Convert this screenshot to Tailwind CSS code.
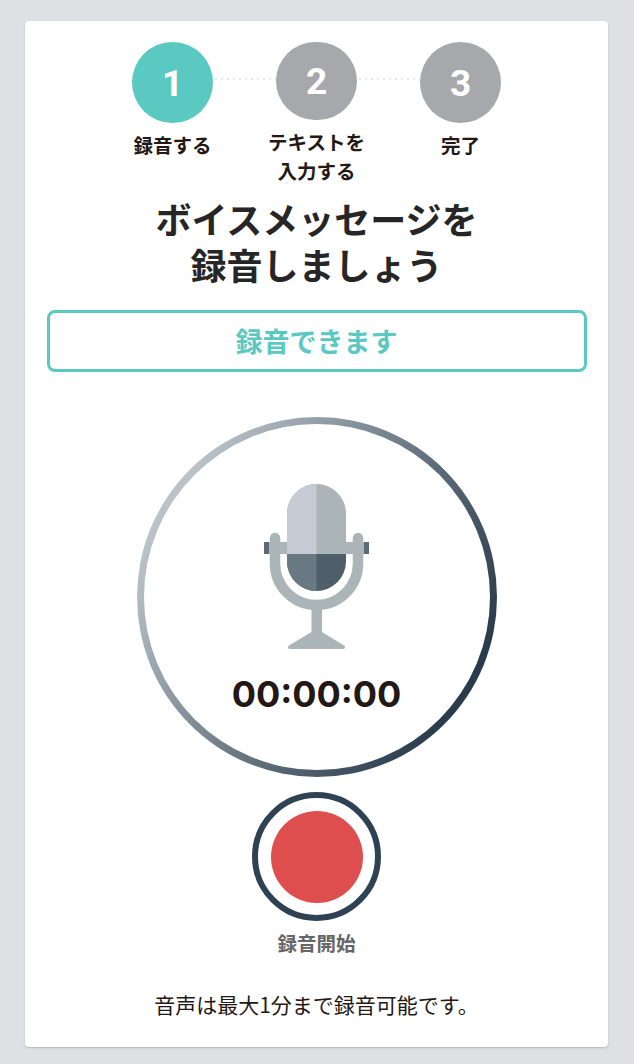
<!doctype html>
<html lang="ja">
  <head>
    <meta charset="UTF-8" />
    <meta name="viewport" content="width=device-width, initial-scale=1.0" />
    <title>ボイスメッセージ録音</title>
    <script src="https://cdn.jsdelivr.net/npm/@tailwindcss/browser@4"></script>
  </head>
  <body class="bg-[#dfe0e4] font-['Noto_Sans_CJK_JP',sans-serif] text-[#231815]">
    <main class="px-[25px] pt-[21px] pb-[17px] h-[1064px]">
      <div class="bg-white rounded-[4px] shadow-[0_1px_2px_rgba(0,0,0,0.2)] w-[583px] h-[1026px] flex flex-col items-center">
        <!-- steps -->
        <div class="relative flex justify-center gap-[63px] pt-[21px] h-[164px]">
          <div class="absolute left-[81px] right-[81px] top-[56px] h-[4px] bg-[radial-gradient(circle,#e6e6e6_1.2px,transparent_1.6px)] bg-size-[6px_4px]"></div>
          <div class="relative flex flex-col items-center w-[81px]">
            <div class="w-[81px] h-[81px] pt-[2px] rounded-full bg-[#5ac9c2] flex items-center justify-center text-white text-[37px] font-bold font-['Roboto',sans-serif]">1</div>
            <p class="mt-[7px] text-[19.5px] leading-[29px] font-bold whitespace-nowrap text-center">録音する</p>
          </div>
          <div class="relative flex flex-col items-center w-[81px]">
            <div class="w-[81px] h-[81px] pt-[2px] rounded-full bg-[#a6a8ab] flex items-center justify-center text-white text-[37px] font-bold font-['Roboto',sans-serif]">2</div>
            <p class="mt-[7px] text-[19.5px] leading-[29px] font-bold whitespace-nowrap text-center">テキストを<br />入力する</p>
          </div>
          <div class="relative flex flex-col items-center w-[81px]">
            <div class="w-[81px] h-[81px] pt-[2px] rounded-full bg-[#a6a8ab] flex items-center justify-center text-white text-[37px] font-bold font-['Roboto',sans-serif]">3</div>
            <p class="mt-[7px] text-[19.5px] leading-[29px] font-bold whitespace-nowrap text-center">完了</p>
          </div>
        </div>

        <h1 class="text-[36px] leading-[46px] font-bold text-center text-[#262626] mt-[10px]">ボイスメッセージを<br />録音しましょう</h1>

        <div class="mt-[23px] w-[540px] h-[62px] border-[3px] border-[#5ac9c2] rounded-[8px] flex items-center justify-center text-[#5ac9c2] text-[27px] font-bold">録音できます</div>

        <!-- timer -->
        <div class="mt-[45px] w-[360px] h-[360px] rounded-full p-[7px] bg-linear-120 from-[#bac2c8] from-15% to-[#2a3b4b] to-85%">
          <div class="w-full h-full rounded-full bg-white flex flex-col items-center pt-[60px]">
            <svg class="w-[105px] h-[165px]" viewBox="0 0 105 165" aria-hidden="true">
              <rect x="0" y="58" width="105" height="12" fill="#5b6b76" />
              <rect x="5" y="58" width="95" height="12" fill="#abb4b7" />
              <path d="M11 54V79.5a41.5 41.5 0 0 0 83 0V54" fill="none" stroke="#abb4b7" stroke-width="10.5" stroke-linecap="round" />
              <path d="M23 29.5A29.5 29.5 0 0 1 82 29.5V71H23z" fill="#abb4b7" />
              <path d="M23 29.5A29.5 29.5 0 0 1 52.5 0V71H23z" fill="#c6cbd3" />
              <path d="M23 70H82V77.5A29.5 29.5 0 0 1 23 77.5z" fill="#4e5f69" />
              <path d="M23 70H52.5V107A29.5 29.5 0 0 1 23 77.5z" fill="#6a7882" />
              <rect x="47.5" y="120" width="10.5" height="32" fill="#abb4b7" />
              <path d="M47.5 148L25 161.5Q22.5 164.5 26 165H79Q82.5 164.5 80 161.5L58 148z" fill="#abb4b7" />
            </svg>
            <p class="mt-[23px] text-[36px] leading-[44px] font-bold font-['Inter',sans-serif]">00:00:00</p>
          </div>
        </div>

        <!-- record button -->
        <button type="button" class="mt-[15px] w-[129px] h-[129px] rounded-full border-[6px] border-[#2f4254] flex items-center justify-center">
          <span class="block w-[92px] h-[92px] rounded-full bg-[#df4e4e]"></span>
        </button>
        <p class="mt-[8px] text-[19.5px] leading-[28px] font-bold text-[#666666]">録音開始</p>

        <p class="mt-[33px] text-[21px] leading-[28px]">音声は最大1分まで録音可能です。</p>
      </div>
    </main>
  </body>
</html>
